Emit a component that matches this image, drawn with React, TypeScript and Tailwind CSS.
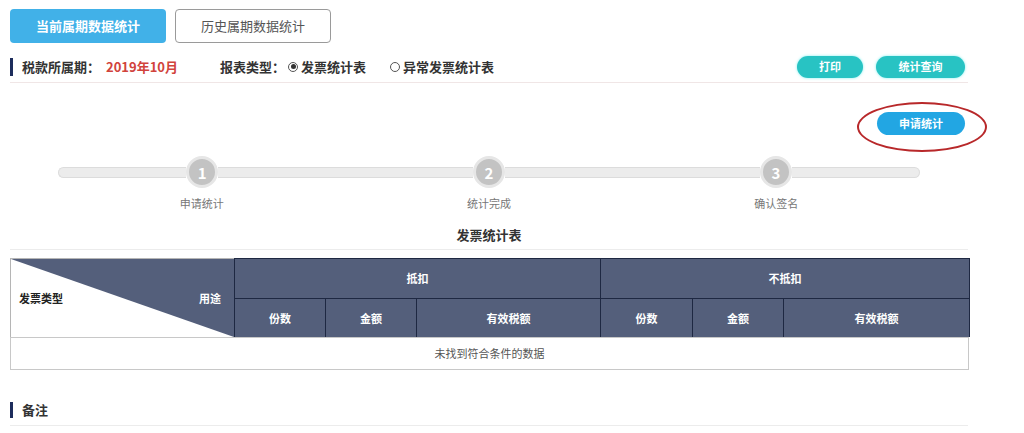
import React from "react";

const F = { fontFamily: '"Noto Sans CJK SC", "Noto Sans", sans-serif' };

function Radio({ checked }: { checked?: boolean }) {
  return (
    <span className="inline-flex h-[10px] w-[10px] items-center justify-center rounded-full border border-[#555] bg-white">
      {checked && <span className="h-[5px] w-[5px] rounded-full bg-[#333]" />}
    </span>
  );
}

function Step({ n, label, first, last }: { n: number; label: string; first?: boolean; last?: boolean }) {
  return (
    <div className="flex flex-col items-center">
      <div className="flex h-[32px] w-full items-center">
        <div className={`h-[11px] flex-1 border-y border-[#dcdcdc] bg-[#ececec] ${first ? "rounded-l-full border-l" : ""}`} />
        <div className="flex h-[32px] w-[32px] items-center justify-center rounded-full border-[3px] border-[#e6e6e6] bg-[#c3c3c3] text-[15px] font-bold leading-none text-white">
          {n}
        </div>
        <div className={`h-[11px] flex-1 border-y border-[#dcdcdc] bg-[#ececec] ${last ? "rounded-r-full border-r" : ""}`} />
      </div>
      <div className="mt-[8px] text-[11px] leading-[15px] text-[#777]">{label}</div>
    </div>
  );
}

const H = "flex items-center justify-center border-l border-t border-[#1e2842] bg-[#545f7b] text-[11px] font-bold text-white";

export default function App() {
  return (
    <div className="h-[433px] w-[1024px] overflow-hidden bg-white" style={F}>
      <div className="ml-[10px] w-[958px]">
        {/* tabs */}
        <div className="flex gap-[9px] pt-[9px]">
          <div className="flex h-[34px] w-[156px] items-center justify-center rounded-[4px] bg-[#41b1e8] text-[13px] font-bold text-white">
            当前属期数据统计
          </div>
          <div className="flex h-[34px] w-[156px] items-center justify-center rounded-[4px] border border-[#9a9a9a] bg-white text-[13px] text-[#555]">
            历史属期数据统计
          </div>
        </div>

        {/* period row */}
        <div className="mt-[8px] flex h-[32px] items-center border-b border-[#f0e6e6]">
          <div className="h-[18px] w-[3px] bg-[#1d2d5c]" />
          <span className="ml-[9px] text-[13px] font-bold text-[#333]">税款所属期：</span>
          <span className="ml-[6px] text-[13px] font-bold text-[#d1433c]">2019年10月</span>
          <span className="ml-[42px] text-[13px] font-bold text-[#333]">报表类型：</span>
          <span className="ml-[3px] flex items-center gap-[3px]">
            <Radio checked />
            <span className="text-[13px] font-bold text-[#333]">发票统计表</span>
          </span>
          <span className="ml-[24px] flex items-center gap-[3px]">
            <Radio />
            <span className="text-[13px] font-bold text-[#333]">异常发票统计表</span>
          </span>
          <div className="ml-auto mr-[3px] flex items-center gap-[13px]">
            <button className="flex h-[22px] w-[66px] items-center justify-center rounded-full bg-[#28c3c3] text-[11px] font-bold text-white shadow-[0_0_3px_#7ff0f0]">
              打印
            </button>
            <button className="flex h-[22px] w-[89px] items-center justify-center rounded-full bg-[#28c3c3] text-[11px] font-bold text-white shadow-[0_0_3px_#7ff0f0]">
              统计查询
            </button>
          </div>
        </div>

        {/* apply button */}
        <div className="flex justify-end pr-[3px] pt-[29px]">
          <div className="relative">
            <button className="flex h-[23px] w-[88px] items-center justify-center rounded-full bg-[#22a6e3] text-[11px] font-bold text-white">
              申请统计
            </button>
            <div className="pointer-events-none absolute left-[-20px] top-[-10px] h-[50px] w-[130px] rounded-[50%] border-2 border-[#b8282a]" />
          </div>
        </div>

        {/* steps */}
        <div className="ml-[48px] mt-[21px] grid w-[862px] grid-cols-3">
          <Step n={1} label="申请统计" first />
          <Step n={2} label="统计完成" />
          <Step n={3} label="确认签名" last />
        </div>

        {/* title */}
        <div className="flex h-[39px] items-end justify-center border-b border-[#ececec] pb-[4px]">
          <span className="text-[13px] font-bold leading-[20px] text-[#333]">发票统计表</span>
        </div>

        {/* table */}
        <div className="mt-[8px] w-[959px]">
          <div className="grid grid-cols-[224px_91px_91px_184px_92px_91px_187px] grid-rows-[40px_39px]">
            <div className="relative row-span-2 border-l border-t border-[#b5b5b5]">
              <svg className="absolute inset-0 h-full w-full" viewBox="0 0 100 100" preserveAspectRatio="none">
                <polygon points="0,0 100,0 100,100" fill="#545f7b" />
              </svg>
              <div className="relative flex h-full items-center justify-between pl-[8px] pr-[13px]">
                <span className="text-[11px] font-bold text-[#222]">发票类型</span>
                <span className="text-[11px] font-bold text-white">用途</span>
              </div>
            </div>
            <div className={`${H} col-span-3`}>抵扣</div>
            <div className={`${H} col-span-3 border-r`}>不抵扣</div>
            <div className={H}>份数</div>
            <div className={H}>金额</div>
            <div className={H}>有效税额</div>
            <div className={H}>份数</div>
            <div className={H}>金额</div>
            <div className={`${H} border-r`}>有效税额</div>
          </div>
          <div className="flex h-[33px] items-center justify-center border border-[#c8c8c8] text-[11px] text-[#555]">
            未找到符合条件的数据
          </div>
        </div>

        {/* remarks */}
        <div className="mt-[25px] flex h-[31px] items-center border-b border-[#ececec]">
          <div className="h-[16px] w-[3px] bg-[#1d2d5c]" />
          <span className="ml-[9px] text-[13px] font-bold text-[#333]">备注</span>
        </div>
      </div>
    </div>
  );
}
